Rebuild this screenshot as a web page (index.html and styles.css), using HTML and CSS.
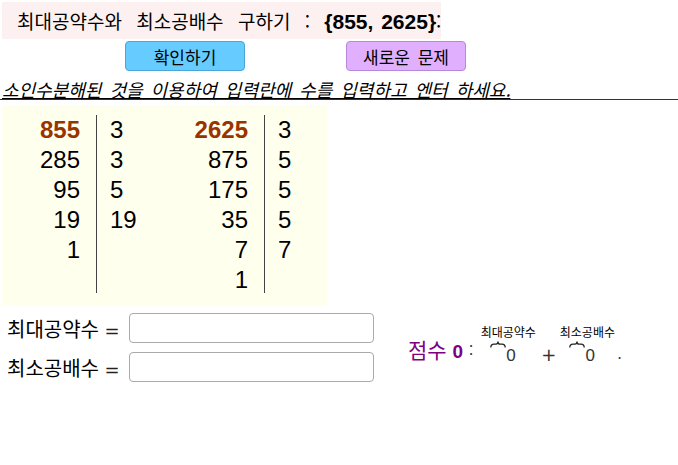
FILE: index.html
```html
<!DOCTYPE html>
<html lang="ko">
<head>
<meta charset="utf-8">
<link rel="stylesheet" href="styles.css">
</head>
<body>
<div class="page">
  <div class="title">최대공약수와 최소공배수 구하기 : <b class="set">{855, 2625}</b>:</div>
  <div class="buttons">
    <button class="btn btn-ok">확인하기</button>
    <button class="btn btn-new">새로운 문제</button>
  </div>
  <div class="instruction">소인수분해된 것을 이용하여 입력란에 수를 입력하고 엔터 하세요.</div>
  <div class="rule"></div>
  <div class="factors">
    <div class="col num"><span class="top">855</span><span>285</span><span>95</span><span>19</span><span>1</span><span>&nbsp;</span></div>
    <div class="bar"></div>
    <div class="col div1"><span>3</span><span>3</span><span>5</span><span>19</span><span>&nbsp;</span><span>&nbsp;</span></div>
    <div class="col num"><span class="top">2625</span><span>875</span><span>175</span><span>35</span><span>7</span><span>1</span></div>
    <div class="bar"></div>
    <div class="col div2"><span>3</span><span>5</span><span>5</span><span>5</span><span>7</span><span>&nbsp;</span></div>
  </div>
  <div class="lower">
    <div class="inputs">
      <div class="field"><span class="label">최대공약수 <span class="eq">=</span></span><span class="box"></span></div>
      <div class="field"><span class="label">최소공배수 <span class="eq">=</span></span><span class="box"></span></div>
    </div>
    <div class="score">
      <span class="score-label">점수 <b>0</b></span><span class="colon">:</span>
      <span class="term">
        <span class="small">최대공약수</span>
        <svg class="brace" width="16" height="7" viewBox="0 0 16 7"><path d="M0.8 6.5 Q0.8 3.2 4 3.2 L6 3.2 Q8 3.2 8 0.6 Q8 3.2 10 3.2 L12 3.2 Q15.2 3.2 15.2 6.5" fill="none" stroke="#222" stroke-width="1.3"/></svg>
        <span class="val">0</span>
      </span>
      <span class="plus">+</span>
      <span class="term">
        <span class="small">최소공배수</span>
        <svg class="brace" width="16" height="7" viewBox="0 0 16 7"><path d="M0.8 6.5 Q0.8 3.2 4 3.2 L6 3.2 Q8 3.2 8 0.6 Q8 3.2 10 3.2 L12 3.2 Q15.2 3.2 15.2 6.5" fill="none" stroke="#222" stroke-width="1.3"/></svg>
        <span class="val">0</span>
      </span>
      <span class="dot">.</span>
    </div>
  </div>
</div>
</body>
</html>
```

FILE: styles.css
```css
html, body {
  margin: 0;
  padding: 0;
  background: #fff;
}
body {
  font-family: "Noto Sans CJK KR", "Liberation Sans", sans-serif;
  color: #000;
  width: 678px;
  height: 465px;
  overflow: hidden;
}
.page {
  padding-top: 2px;
}
.title {
  margin-left: 2px;
  width: 424px;
  height: 37px;
  padding-left: 15px;
  background: #fdf0f0;
  font-size: 19px;
  line-height: 37px;
  word-spacing: 9px;
  white-space: nowrap;
}
.title .set {
  font-family: "Liberation Sans", sans-serif;
  font-weight: bold;
  font-size: 21px;
  word-spacing: 2px;
  margin-left: 0;
}
.buttons {
  display: flex;
  height: 30px;
  margin-top: 2px;
  padding-left: 125px;
}
.btn {
  font-family: "Noto Sans CJK KR", sans-serif;
  font-size: 17px;
  width: 120px;
  height: 30px;
  border-radius: 4px;
  padding: 0;
  color: #000;
  word-spacing: 3px;
  cursor: pointer;
}
.btn-ok {
  background: #66ccff;
  border: 1px solid #4aa6d8;
}
.btn-new {
  margin-left: 101px;
  background: #e0b0ff;
  border: 1px solid #b888d8;
}
.instruction {
  margin-top: 8px;
  margin-left: 2px;
  font-size: 18px;
  line-height: 20px;
  font-style: italic;
  text-decoration: underline;
  word-spacing: 3px;
  white-space: nowrap;
}
.rule {
  height: 1px;
  background: #333;
}
.factors {
  margin-top: 5px;
  margin-left: 2px;
  width: 325px;
  height: 190px;
  padding-top: 10px;
  background: #ffffee;
  display: flex;
  align-items: flex-start;
  font-family: "Liberation Sans", sans-serif;
  font-size: 24px;
}
.col {
  display: flex;
  flex-direction: column;
}
.col span {
  height: 30px;
  line-height: 30px;
}
.num {
  width: 78px;
  text-align: right;
}
.top {
  color: #993300;
  font-weight: bold;
}
.bar {
  width: 1px;
  height: 178px;
  background: #444;
  margin-left: 16px;
}
.div1 {
  width: 60px;
  padding-left: 13px;
}
.div2 {
  padding-left: 13px;
}
.lower {
  display: flex;
  margin-top: 6px;
}
.inputs {
  display: flex;
  flex-direction: column;
  gap: 9px;
  padding-top: 2px;
}
.field {
  display: flex;
  align-items: center;
  height: 30px;
}
.label {
  width: 122px;
  padding-left: 7px;
  font-size: 20px;
  white-space: nowrap;
}
.eq {
  font-family: "DejaVu Sans", sans-serif;
  font-size: 18px;
  color: #222;
}
.box {
  display: block;
  width: 243px;
  height: 28px;
  border: 1px solid #aaa;
  border-radius: 4px;
  background: #fff;
}
.score {
  display: flex;
  align-items: flex-start;
  margin-left: 34px;
  padding-top: 14px;
}
.score-label {
  color: #800080;
  font-size: 21px;
  line-height: 20px;
  margin-top: 14px;
  white-space: nowrap;
}
.score-label b {
  font-family: "Liberation Sans", sans-serif;
  font-size: 19px;
}
.colon {
  margin-left: 6px;
  margin-top: 15px;
  font-size: 15px;
  line-height: 20px;
  color: #333;
}
.term {
  display: block;
  width: 60px;
  margin-left: 5px;
}
.small {
  display: block;
  text-align: center;
  font-size: 12px;
  line-height: 13px;
  white-space: nowrap;
}
.brace {
  display: block;
  margin-top: 3px;
  margin-left: 12px;
}
.val {
  display: block;
  font-family: "Liberation Sans", sans-serif;
  font-size: 17px;
  line-height: 16px;
  color: #333;
  margin-left: 28px;
  margin-top: 0;
}
.plus {
  font-family: "DejaVu Sans", sans-serif;
  font-size: 18px;
  line-height: 18px;
  margin-top: 21px;
  margin-left: 3px;
  margin-right: 0;
  color: #333;
}
.term + .plus + .term {
  margin-left: 1px;
}
.dot {
  margin-left: 0;
  margin-top: 19px;
  font-size: 15px;
  line-height: 18px;
  color: #333;
}
```
